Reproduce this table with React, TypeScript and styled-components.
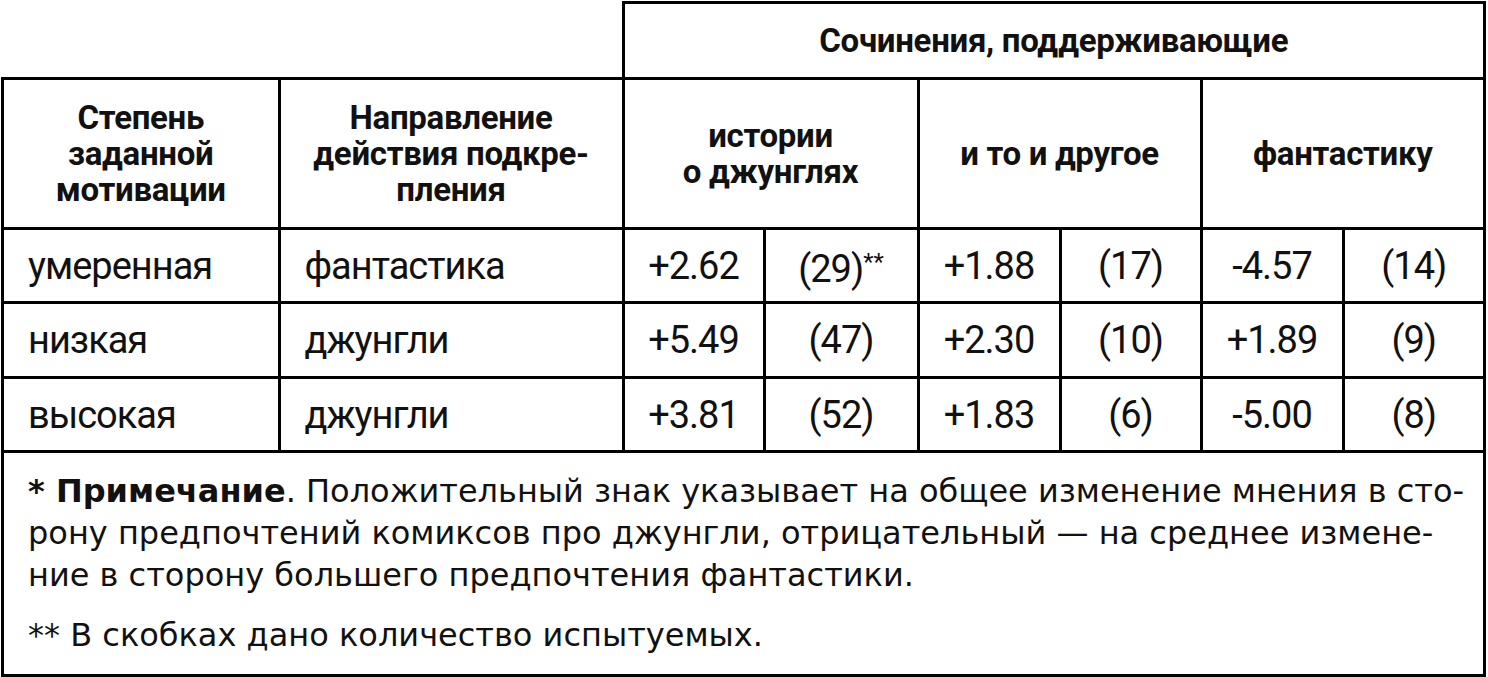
import React from "react";
import styled, { createGlobalStyle } from "styled-components";

const Global = createGlobalStyle`
  html, body { margin: 0; padding: 0; background: #fff; }
  body { font-family: Roboto, "Liberation Sans", sans-serif; color: #111; }
`;

const Table = styled.table`
  border-collapse: collapse;
  table-layout: fixed;
  width: 1485px;
  margin: 1px 0 0 1px;
`;

const Empty = styled.td`
  border: none;
  padding: 0;
`;

const Head = styled.th<{ $h: number }>`
  border: 3px solid #000;
  padding: 0 8px;
  height: ${(p) => p.$h}px;
  text-align: center;
  vertical-align: middle;
  font-family: Roboto, "Liberation Sans", sans-serif;
  font-weight: 700;
  font-size: 33px;
  line-height: 36px;
  letter-spacing: -0.3px;
`;

const Cell = styled.td<{ $left?: boolean; $h: number }>`
  border: 3px solid #000;
  padding: ${(p) => (p.$left ? "0 0 0 24px" : "0")};
  height: ${(p) => p.$h}px;
  text-align: ${(p) => (p.$left ? "left" : "center")};
  vertical-align: middle;
  font-family: Roboto, "Liberation Sans", sans-serif;
  font-weight: 400;
  font-size: 38px;
  line-height: 44px;
  letter-spacing: -1px;
  white-space: nowrap;
`;

const Sup = styled.span`
  font-size: 24px;
  vertical-align: 12px;
  letter-spacing: 0;
`;

const NoteCell = styled.td`
  border: 3px solid #000;
  padding: 17px 24px 18px 24px;
  vertical-align: top;
  font-family: "DejaVu Sans", Roboto, sans-serif;
  font-size: 32px;
  line-height: 42px;
  letter-spacing: 0;
  white-space: nowrap;
`;

const NotePara = styled.p`
  margin: 0;
  & + & { margin-top: 18px; }
`;

const Strong = styled.b`
  font-weight: 700;
`;

type Row = [string, string, string, string, string, string, string, string];

const rows: { h: number; cells: Row }[] = [
  { h: 71, cells: ["умеренная", "фантастика", "+2.62", "(29)**", "+1.88", "(17)", "-4.57", "(14)"] },
  { h: 72, cells: ["низкая", "джунгли", "+5.49", "(47)", "+2.30", "(10)", "+1.89", "(9)"] },
  { h: 71, cells: ["высокая", "джунгли", "+3.81", "(52)", "+1.83", "(6)", "-5.00", "(8)"] },
];

const widths = [276.5, 344, 141, 154, 142, 141, 142, 141.5];

function renderValue(v: string) {
  if (v.endsWith("**")) {
    return (
      <>
        {v.slice(0, -2)}
        <Sup>**</Sup>
      </>
    );
  }
  return v;
}

export default function App() {
  return (
    <>
      <Global />
      <Table>
        <colgroup>
          {widths.map((w, i) => (
            <col key={i} style={{ width: w }} />
          ))}
        </colgroup>
        <thead>
          <tr>
            <Empty colSpan={2} />
            <Head colSpan={6} $h={73}>
              Сочинения, поддерживающие
            </Head>
          </tr>
          <tr>
            <Head $h={147}>
              Степень
              <br />
              заданной
              <br />
              мотивации
            </Head>
            <Head $h={147}>
              Направление
              <br />
              действия подкре-
              <br />
              пления
            </Head>
            <Head colSpan={2} $h={147}>
              истории
              <br />о джунглях
            </Head>
            <Head colSpan={2} $h={147}>
              и то и другое
            </Head>
            <Head colSpan={2} $h={147}>
              фантастику
            </Head>
          </tr>
        </thead>
        <tbody>
          {rows.map((r, i) => (
            <tr key={i}>
              {r.cells.map((v, j) => (
                <Cell key={j} $left={j < 2} $h={r.h}>
                  {renderValue(v)}
                </Cell>
              ))}
            </tr>
          ))}
          <tr>
            <NoteCell colSpan={8}>
              <NotePara>
                <Strong>* Примечание</Strong>. Положительный знак указывает на общее изменение мнения в сто-
                <br />
                рону предпочтений комиксов про джунгли, отрицательный — на среднее измене-
                <br />
                ние в сторону большего предпочтения фантастики.
              </NotePara>
              <NotePara>** В скобках дано количество испытуемых.</NotePara>
            </NoteCell>
          </tr>
        </tbody>
      </Table>
    </>
  );
}
